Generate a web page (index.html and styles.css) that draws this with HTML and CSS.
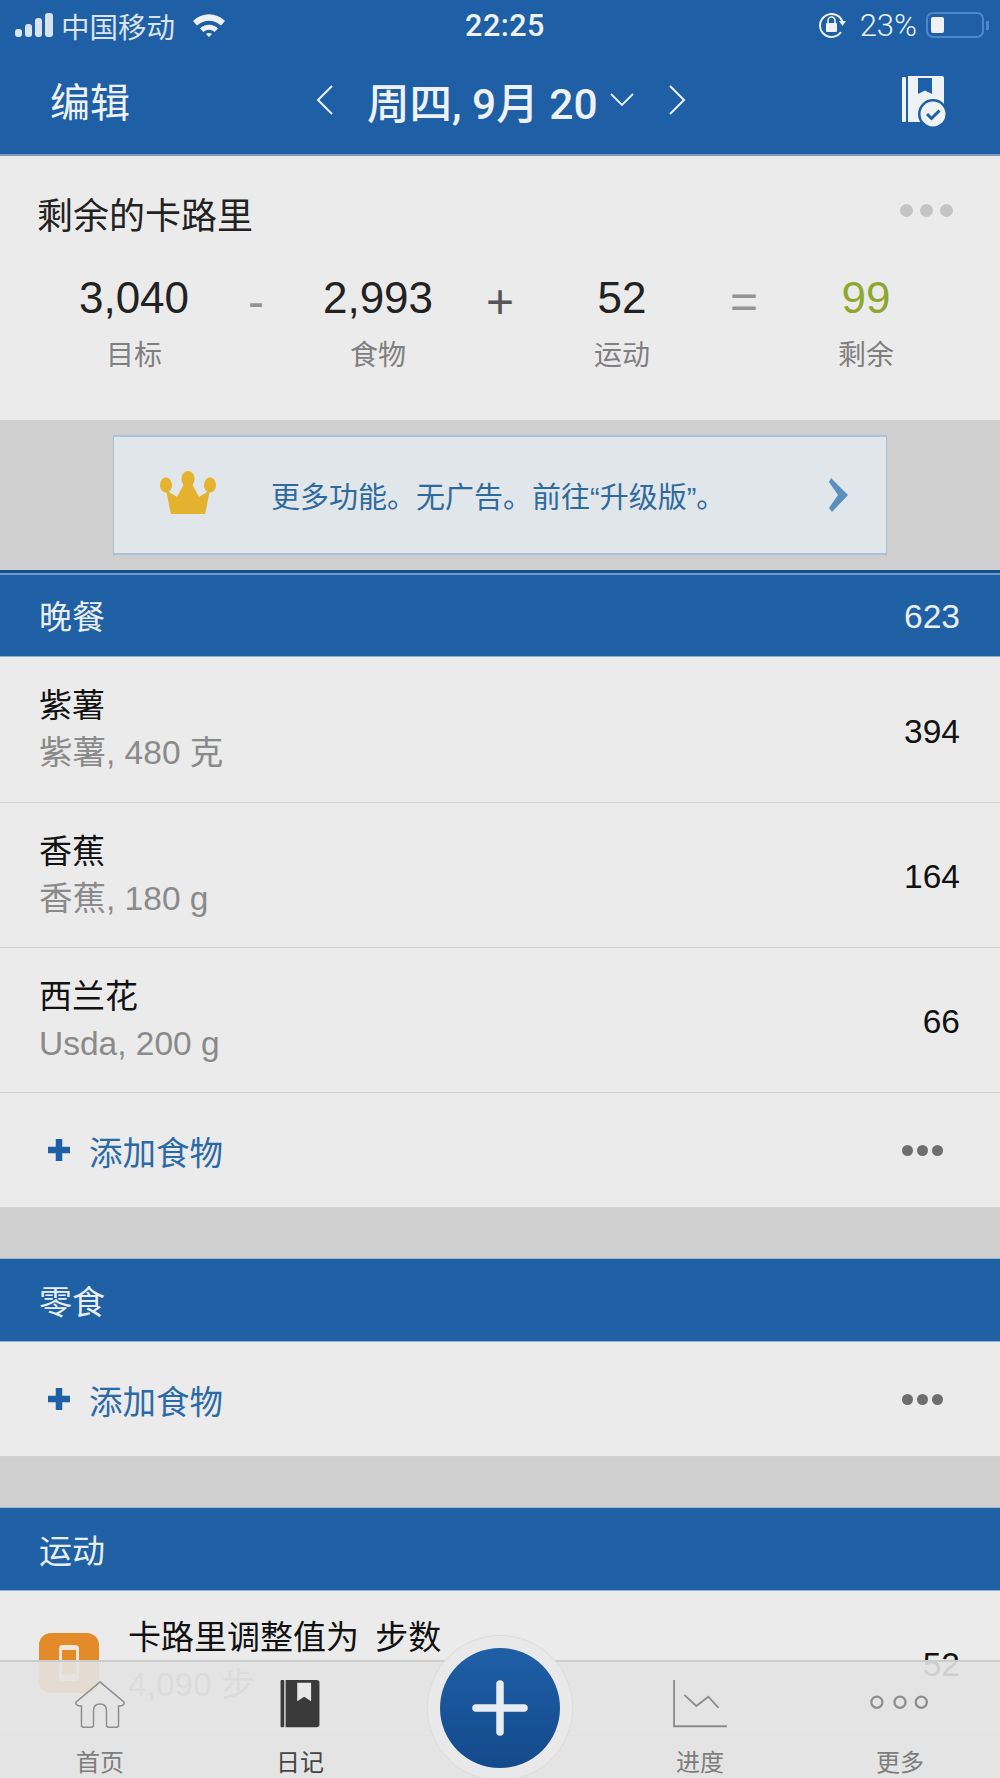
FILE: index.html
```html
<!DOCTYPE html>
<html lang="zh-CN">
<head>
    <meta charset="UTF-8">
    <title>日记</title>
    <link rel="stylesheet" href="styles.css">
</head>
<body>
<div class="phone">
    <header class="top">
        <div class="status">
            <div class="status-left">
                <span class="signal"><i></i><i></i><i></i><i></i></span>
                <span>中国移动</span>
                <svg class="wifi" width="34" height="24" viewBox="0 0 34 24"><path d="M1 8 C10 -1 24 -1 33 8 L29 12.500 C22 6 12 6 5 12.500 Z M8 15.500 C13 10.500 21 10.500 26 15.500 L22.500 19 C19 16 15 16 11.500 19 Z M14 21 C16 19.500 18 19.500 20 21 L17 24 Z" fill="#eef2f5"/></svg>
            </div>
            <div class="status-time">22:25</div>
            <div class="status-right">
                <svg width="30" height="30" viewBox="0 0 30 30"><path d="M24 22 A11.5 11.5 0 1 1 25.5 12" fill="none" stroke="#eef2f5" stroke-width="2"/><path d="M22 11 L29 11 L25.5 16 Z" fill="#eef2f5"/><rect x="9" y="13" width="11" height="9" rx="1" fill="#eef2f5"/><path d="M11 13 V10.5 A3.5 3.5 0 0 1 18 10.5 V13" fill="none" stroke="#eef2f5" stroke-width="1.6"/></svg>
                <span class="percent">23%</span>
                <span class="battery"><b></b></span>
                <span class="battery-tip"></span>
            </div>
        </div>
        <div class="nav">
            <div class="nav-edit">编辑</div>
            <div class="nav-date">
                <svg width="20" height="34" viewBox="0 0 20 34"><path d="M17 3 L3 17 L17 31" fill="none" stroke="#eef2f5" stroke-width="2"/></svg>
                <span class="nav-title">周四, 9月 20</span>
                <svg class="nav-caret" width="26" height="16" viewBox="0 0 26 16"><path d="M2 2 L13 13 L24 2" fill="none" stroke="#eef2f5" stroke-width="1.8"/></svg>
                <svg class="nav-next" width="20" height="34" viewBox="0 0 20 34"><path d="M3 3 L17 17 L3 31" fill="none" stroke="#eef2f5" stroke-width="2"/></svg>
            </div>
            <svg class="nav-book" width="48" height="54" viewBox="0 0 48 54"><rect x="2" y="2" width="4" height="45" rx="1" fill="#eef2f5"/><path d="M8 1 H42 a2 2 0 0 1 2 2 V47 H8 Z" fill="#eef2f5"/><path d="M18 3 H32 V19 L25 15.500 L18 19 Z" fill="#1f5fa6"/><circle cx="33" cy="39" r="15" fill="#1f5fa6"/><circle cx="33" cy="39" r="12.500" fill="#eef2f5"/><path d="M27 39 L31.500 43.500 L39.500 35.500" fill="none" stroke="#1f5fa6" stroke-width="3"/></svg>
        </div>
    </header>

    <section class="summary">
        <div class="summary-head">
            <h2>剩余的卡路里</h2>
            <span class="dots dots-light"><i></i><i></i><i></i></span>
        </div>
        <div class="summary-row">
            <div class="cell"><strong>3,040</strong><span>目标</span></div>
            <div class="op">-</div>
            <div class="cell"><strong>2,993</strong><span>食物</span></div>
            <div class="op op-dark">+</div>
            <div class="cell"><strong>52</strong><span>运动</span></div>
            <div class="op">=</div>
            <div class="cell"><strong class="green">99</strong><span>剩余</span></div>
        </div>
    </section>

    <div class="promo-wrap">
        <div class="promo">
            <svg class="crown" width="58" height="44" viewBox="0 0 58 44"><ellipse cx="7" cy="15" rx="6" ry="7.500" fill="#e4b22f"/><ellipse cx="29" cy="9" rx="6.500" ry="8" fill="#e4b22f"/><ellipse cx="51" cy="15" rx="6" ry="7.500" fill="#e4b22f"/><path d="M12 44 L7 20 L18 27 L26 12 H32 L40 27 L51 20 L46 44 Z" fill="#e4b22f"/></svg>
            <span class="promo-text">更多功能。无广告。前往“升级版”。</span>
            <svg class="promo-arrow" width="20" height="34" viewBox="0 0 20 34"><path d="M2 0 L19 17 L3 34 L0 30 L9 17 L0 4 Z" fill="#5b8fc0"/></svg>
        </div>
    </div>

    <div class="band band-first"><span>晚餐</span><span class="band-num">623</span></div>
    <div class="row row-first">
        <div><div class="name">紫薯</div><div class="sub">紫薯, 480 克</div></div>
        <div class="cal">394</div>
    </div>
    <div class="row">
        <div><div class="name">香蕉</div><div class="sub">香蕉, 180 g</div></div>
        <div class="cal">164</div>
    </div>
    <div class="row">
        <div><div class="name">西兰花</div><div class="sub">Usda, 200 g</div></div>
        <div class="cal">66</div>
    </div>
    <div class="add">
        <svg class="plus" width="22" height="22" viewBox="0 0 22 22"><path d="M11 0 V22 M0 11 H22" stroke="#1f5fa6" stroke-width="6.500"/></svg>
        <span class="add-text">添加食物</span>
        <span class="dots"><i></i><i></i><i></i></span>
    </div>
    <div class="gap"></div>

    <div class="band"><span>零食</span></div>
    <div class="add">
        <svg class="plus" width="22" height="22" viewBox="0 0 22 22"><path d="M11 0 V22 M0 11 H22" stroke="#1f5fa6" stroke-width="6.500"/></svg>
        <span class="add-text">添加食物</span>
        <span class="dots"><i></i><i></i><i></i></span>
    </div>
    <div class="gap"></div>

    <div class="band"><span>运动</span></div>
    <div class="row row-ex">
        <div class="ex-icon"><span class="ex-phone"></span></div>
        <div><div class="name">卡路里调整值为 步数</div><div class="sub">4,090 步</div></div>
        <div class="cal">52</div>
    </div>

    <nav class="tabs">
        <div class="tab">
            <svg width="56" height="54" viewBox="0 0 56 54"><path d="M28 2 L54 24 Q55 27 50 28 H48 V49 Q48 51 46 51 H37 Q35 51 35 49 V33 Q35 26 28 26 Q21 26 21 33 V49 Q21 51 19 51 H10 Q8 51 8 49 V28 H6 Q1 27 2 24 Z" fill="none" stroke="#8d8d8d" stroke-width="1.6"/></svg>
            <span>首页</span>
        </div>
        <div class="tab tab-on">
            <svg width="42" height="54" viewBox="0 0 42 54"><rect x="0" y="0" width="4" height="51" rx="1" fill="#3a3a3a"/><path d="M5.500 0 H39 a3 3 0 0 1 3 3 V48 a3 3 0 0 1 -3 3 H5.500 Z" fill="#3a3a3a"/><path d="M18 3 H33 V23 L25.500 18 L18 23 Z" fill="#e8e8e8"/></svg>
            <span>日记</span>
        </div>
        <div class="tab-space"></div>
        <div class="tab">
            <svg width="58" height="54" viewBox="0 0 58 54"><path d="M1 0 V50 H58" fill="none" stroke="#8d8d8d" stroke-width="2"/><path d="M12 16 L25 28 L38 18 L49 30" fill="none" stroke="#8d8d8d" stroke-width="2"/></svg>
            <span>进度</span>
        </div>
        <div class="tab">
            <svg width="64" height="54" viewBox="0 0 64 54"><circle cx="7" cy="24" r="6" fill="none" stroke="#8d8d8d" stroke-width="2.400"/><circle cx="32" cy="24" r="6" fill="none" stroke="#8d8d8d" stroke-width="2.400"/><circle cx="55" cy="24" r="6" fill="none" stroke="#8d8d8d" stroke-width="2.400"/></svg>
            <span>更多</span>
        </div>
        <div class="fab"><div class="fab-in"><svg width="56" height="56" viewBox="0 0 56 56"><path d="M28 4 V52 M4 28 H52" stroke="#e8edf2" stroke-width="7.500" stroke-linecap="round"/></svg></div></div>
    </nav>
</div>
</body>
</html>
```

FILE: styles.css
```css
* {
    box-sizing: border-box;
}
html, body {
    margin: 0;
    padding: 0;
}
body {
    font-family: "Liberation Sans", "Noto Sans CJK SC", sans-serif;
    background: #ebebeb;
}
.phone {
    position: relative;
    width: 1000px;
    height: 1778px;
    overflow: hidden;
    background: #ebebeb;
}

/* top bar */
.top {
    height: 156px;
    background: #1f5fa6;
    color: #eef2f5;
    border-bottom: 2px solid #7f9bb8;
}
.status {
    display: flex;
    justify-content: space-between;
    align-items: center;
    height: 50px;
    padding: 0 11px 0 15px;
    font-size: 28.5px;
}
.status-left, .status-right {
    display: flex;
    align-items: center;
    width: 340px;
}
.status-left span {
    opacity: 0.9;
}
.status-right {
    justify-content: flex-end;
}
.signal {
    display: flex;
    align-items: flex-end;
    gap: 3px;
    height: 24px;
    margin-right: 8px;
}
.signal i {
    width: 7px;
    border-radius: 3px;
    background: #eef2f5;
}
.signal i:nth-child(1) { height: 8px; }
.signal i:nth-child(2) { height: 13px; }
.signal i:nth-child(3) { height: 19px; }
.signal i:nth-child(4) { height: 24px; width: 8px; }
.wifi {
    margin-left: 17px;
}
.status-time {
    margin-left: 6px;
    font-family: Roboto, sans-serif;
    font-size: 30.5px;
    font-weight: 500;
    letter-spacing: 0.5px;
}
.percent {
    margin-left: 13px;
    font-family: Roboto, sans-serif;
    font-size: 31px;
    font-weight: 300;
}
.battery {
    width: 58px;
    height: 26px;
    margin-left: 9px;
    padding: 3px;
    border: 2px solid #4f88c8;
    border-radius: 7px;
}
.battery b {
    display: block;
    width: 13px;
    height: 16px;
    background: #eef2f5;
    border-radius: 2px;
}
.battery-tip {
    width: 3px;
    height: 9px;
    margin-left: 2px;
    background: #4f88c8;
}
.nav {
    display: flex;
    align-items: center;
    height: 104px;
    padding: 0 0 4px 50px;
}
.nav-edit {
    width: 265px;
    font-size: 40px;
}
.nav-date {
    display: flex;
    align-items: center;
    width: 385px;
}
.nav-title {
    margin-left: 32px;
    font-family: Roboto, "Noto Sans CJK SC", sans-serif;
    font-size: 42.5px;
    font-weight: 500;
}
.nav-caret {
    margin-left: 11px;
}
.nav-next {
    margin-left: 32px;
}
.nav-book {
    margin-left: 200px;
    margin-top: 4px;
}

/* summary */
.summary {
    height: 264px;
    padding: 0 37px;
}
.summary-head {
    display: flex;
    justify-content: space-between;
    align-items: center;
    height: 90px;
    padding-top: 24px;
}
.summary-head h2 {
    margin: 0;
    font-size: 36px;
    font-weight: 400;
    color: #222;
}
.summary-row {
    display: grid;
    grid-template-columns: 176px 68px 176px 68px 176px 68px 176px;
    justify-content: center;
    margin-left: -37px;
    margin-right: -37px;
}
.cell {
    display: flex;
    flex-direction: column;
    align-items: center;
    padding-top: 27px;
}
.cell strong {
    font-size: 44px;
    font-weight: 400;
    color: #222;
}
.cell span {
    margin-top: 10px;
    font-size: 28px;
    color: #7f7f7f;
}
.cell .green {
    color: #8fa72e;
}
.op {
    padding-top: 28px;
    font-size: 48px;
    text-align: center;
    color: #949494;
}
.op-dark {
    color: #555;
}

/* promo */
.promo-wrap {
    height: 150px;
    padding: 15px 113px 0;
    background: #cfcfcf;
}
.promo {
    display: flex;
    align-items: center;
    height: 120px;
    padding: 0 37px 0 45px;
    background: #e0e6ea;
    border: 1px solid #a8c0d8;
    border-width: 2px 1px;
}
.crown {
    margin-bottom: 6px;
}
.promo-text {
    flex: 1;
    margin-left: 54px;
    font-size: 29px;
    color: #2f6a9c;
}

/* sections */
.band {
    display: flex;
    justify-content: space-between;
    align-items: center;
    height: 84px;
    padding: 0 40px 0 39px;
    background: #2060a4;
    color: #e8eef2;
    font-size: 33px;
    border-top: 1px solid #9dbbd9;
    border-bottom: 1px solid #8fb0d2;
}
.band-first {
    height: 87px;
    border-top: 3px solid #184f8c;
    box-shadow: inset 0 2px 0 #6f9ed0;
}
.band-num {
    padding-top: 4px;
    font-size: 33.5px;
}
.row {
    display: flex;
    justify-content: space-between;
    align-items: center;
    height: 145px;
    padding: 0 40px 0 39px;
    border-bottom: 1px solid #d4d4d4;
}
.row-first {
    height: 146px;
}
.name {
    font-size: 33px;
    line-height: 40px;
    color: #111;
}
.sub {
    margin-top: 7px;
    font-size: 33.5px;
    line-height: 40px;
    color: #8a8a8a;
}
.cal {
    padding-top: 4px;
    font-size: 33.5px;
    color: #111;
}
.add {
    display: flex;
    align-items: center;
    height: 115px;
    padding: 0 40px 0 48px;
    border-bottom: 1px solid #d4d4d4;
}
.add-text {
    flex: 1;
    margin-left: 19px;
    font-size: 33.5px;
    color: #2a6aa6;
}
.gap {
    height: 50px;
    background: #cfcfcf;
}
.dots {
    display: flex;
    gap: 4px;
    margin-right: 17px;
}
.dots i {
    width: 11px;
    height: 11px;
    border-radius: 50%;
    background: #6e6e6e;
}
.dots-light {
    gap: 7px;
    margin-right: 10px;
    margin-bottom: 6px;
}
.dots-light i {
    width: 13px;
    height: 13px;
    background: #c4c4c4;
}
.row-ex {
    align-items: flex-start;
    padding-top: 27px;
    justify-content: flex-start;
}
.row-ex .name {
    word-spacing: 7px;
}
.ex-icon {
    display: flex;
    justify-content: center;
    align-items: center;
    width: 60px;
    height: 60px;
    margin: 15px 29px 0 0;
    border-radius: 12px;
    background: #e38b28;
}
.ex-phone {
    width: 20px;
    height: 36px;
    border: solid #f0e8de;
    border-width: 5px 3px 7px;
    border-radius: 4px;
}
.row-ex .cal {
    margin-left: auto;
    padding-top: 28px;
}

/* bottom tabs */
.tabs {
    position: absolute;
    left: 0;
    right: 0;
    top: 1660px;
    bottom: 0;
    display: flex;
    padding-top: 11px;
    background: rgba(227, 227, 227, 0.9);
    border-top: 2px solid #cdcdcd;
}
.tab {
    display: flex;
    flex: none;
    flex-direction: column;
    align-items: center;
    width: 200px;
    padding-top: 7px;
    font-size: 24px;
    color: #7d7d7d;
}
.tab span {
    margin-top: 13px;
}
.tab-on {
    color: #444;
}
.tab-space {
    width: 200px;
}
.fab {
    position: absolute;
    left: 427px;
    top: -27px;
    display: flex;
    justify-content: center;
    align-items: center;
    width: 146px;
    height: 146px;
    border-radius: 50%;
    background: #e9e9e9;
    border: 1px solid #dcdcdc;
}
.fab-in {
    display: flex;
    justify-content: center;
    align-items: center;
    width: 120px;
    height: 120px;
    border-radius: 50%;
    background: linear-gradient(#1f5fa6, #134a8c);
}
```
